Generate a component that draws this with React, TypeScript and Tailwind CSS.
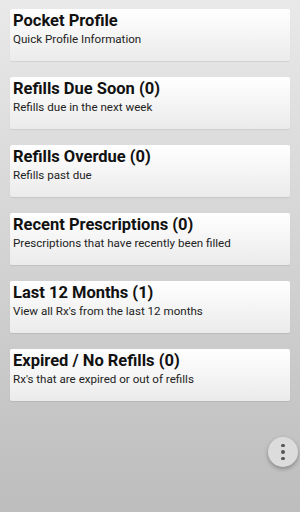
const ITEMS = [
  { title: 'Pocket Profile', sub: 'Quick Profile Information' },
  { title: 'Refills Due Soon (0)', sub: 'Refills due in the next week' },
  { title: 'Refills Overdue (0)', sub: 'Refills past due' },
  { title: 'Recent Prescriptions (0)', sub: 'Prescriptions that have recently been filled' },
  { title: 'Last 12 Months (1)', sub: "View all Rx's from the last 12 months" },
  { title: 'Expired / No Refills (0)', sub: "Rx's that are expired or out of refills" },
]

export default function App() {
  return (
    <div
      className="relative h-[512px] w-[300px] overflow-hidden bg-gradient-to-b from-[#e9e9e9] via-[#d3d3d3] to-[#bdbdbd]"
      style={{ fontFamily: 'Roboto, "Liberation Sans", sans-serif' }}
    >
      <div className="flex flex-col gap-4 px-[10px] pt-[9px]">
        {ITEMS.map((item) => (
          <div
            key={item.title}
            className="h-[52px] rounded-[2px] bg-gradient-to-b from-white to-[#ebebeb] px-[3px] pt-[1px] shadow-[0_1px_1px_rgba(0,0,0,0.08)]"
          >
            <div className="text-[16.5px] font-bold leading-[22px] text-[#111]">
              {item.title}
            </div>
            <div className="text-[11.6px] leading-[14px] text-[#222]">{item.sub}</div>
          </div>
        ))}
      </div>
      <div className="absolute left-[268px] top-[437px] flex h-[30px] w-[30px] flex-col items-center justify-center gap-[3px] rounded-full bg-[#dcdcdc] shadow-[0_2px_4px_rgba(0,0,0,0.3)]">
        <span className="h-[3.5px] w-[3.5px] rounded-full bg-[#555]" />
        <span className="h-[3.5px] w-[3.5px] rounded-full bg-[#555]" />
        <span className="h-[3.5px] w-[3.5px] rounded-full bg-[#555]" />
      </div>
    </div>
  )
}
